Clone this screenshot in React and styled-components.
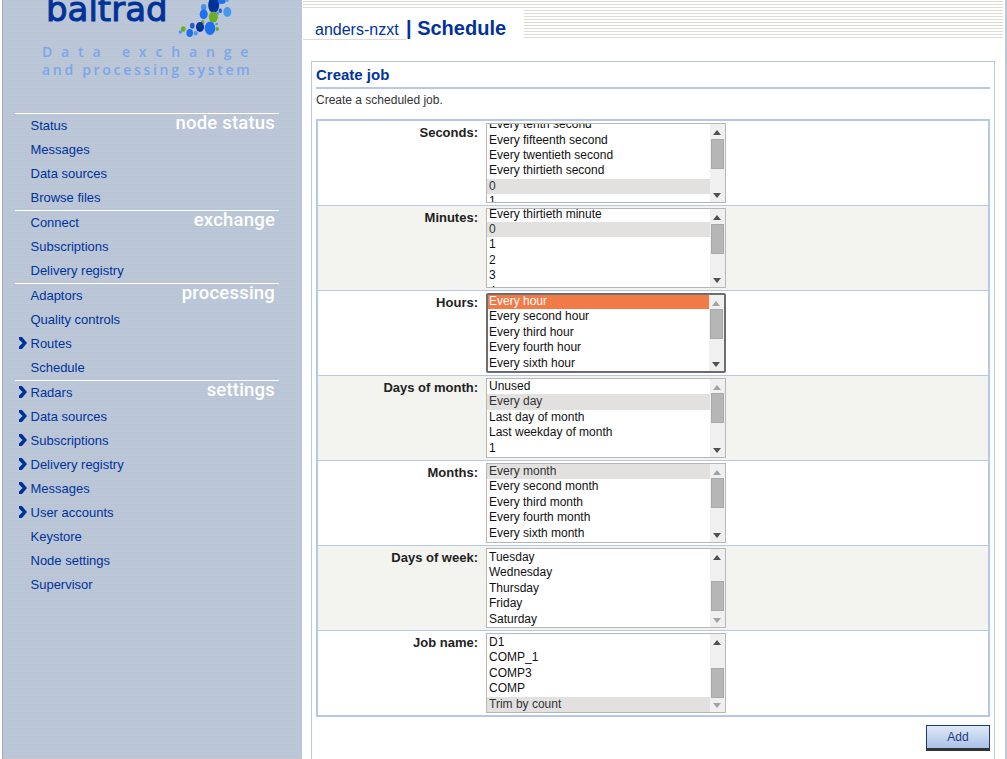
import React from "react";
import styled, { createGlobalStyle } from "styled-components";

const Global = createGlobalStyle`
  html, body { margin: 0; padding: 0; background: #fff; }
  body { font-family: "Liberation Sans", Arial, sans-serif; }
`;

const Page = styled.div`
  display: flex;
  width: 1007px;
  height: 759px;
  overflow: hidden;
  background: #fff;
`;

const Sidebar = styled.aside`
  width: 299px;
  margin-left: 2px;
  margin-right: 1px;
  flex: none;
  border-left: 1px solid #a9a9a9;
  background: repeating-linear-gradient(180deg, #c2c3c6 0 1px, #b4c8e8 1px 2px);
`;

const LogoBlock = styled.div`
  position: relative;
  height: 113px;
  overflow: hidden;
`;

const Wordmark = styled.div`
  padding-left: 43px;
  margin-top: -12px;
  height: 42px;
  font: 400 34px/42px "DejaVu Sans", sans-serif;
  -webkit-text-stroke: 1px #003399;
  color: #003399;
`;

const Blobs = styled.svg`
  position: absolute;
  left: 164px;
  top: 0;
`;

const TagWrap = styled.div`
  padding-top: 13px;
  padding-left: 39px;
`;

const Tagline = styled.div`
  font: 600 14px/18px "Open Sans", sans-serif;
  color: #7ba6e8;
  letter-spacing: ${(p) => p.$spacing}px;
  white-space: nowrap;
  height: 18px;
`;

const Section = styled.section`
  position: relative;
  width: 264px;
  margin-left: 12px;
  border-top: 1px solid #fff;
`;

const SectionTitle = styled.div`
  position: absolute;
  right: 4px;
  top: -3px;
  font: 500 18.5px/24px Roboto, sans-serif;
  letter-spacing: 0.2px;
  color: #fff;
`;

const NavItem = styled.a`
  display: flex;
  align-items: center;
  height: 24px;
  box-sizing: border-box;
  padding: 0 0 2px 2.5px;
  font-size: 13px;
  color: #003399;
`;

const Chevron = styled.svg`
  width: 9px;
  height: 12px;
  flex: none;
`;

const ChevronSlot = styled.span`
  display: flex;
  width: 13px;
  flex: none;
`;

const Main = styled.main`
  flex: 1;
  min-width: 0;
  display: flex;
  flex-direction: column;
  margin-right: 2px;
  position: relative;
`;

const Stripes = styled.div`
  margin-right: 2px;
  background: repeating-linear-gradient(180deg, #fff 0 1px, #dddcd5 1px 2px, #fff 2px 3px);
`;

const TopBand = styled(Stripes)`
  height: 9px;
`;

const HeadRow = styled.div`
  display: flex;
  height: 31px;
`;

const HeadTab = styled.div`
  width: 221px;
  flex: none;
  display: flex;
  background: #fff;
`;

const NodeName = styled.div`
  width: 103px;
  padding-left: 12px;
  box-sizing: border-box;
  height: 31px;
  border-bottom: 1px solid #dcdcd8;
  font-size: 16px;
  line-height: 41px;
  color: #003399;
  white-space: nowrap;
`;

const PageTitle = styled.div`
  font-size: 20px;
  font-weight: 700;
  line-height: 38px;
  color: #003399;
  white-space: nowrap;
`;

const HeadFill = styled(Stripes)`
  flex: 1;
`;

const Strip = styled.div`
  position: absolute;
  top: 0;
  right: -2px;
  width: 2px;
  height: 100%;
  background: #c0c6d2;
`;

const Card = styled.div`
  margin: 21px 8px 0 8px;
  width: 684px;
  box-sizing: border-box;
  flex: 1;
  border: 1px solid #b8c9e6;
  border-bottom: none;
  padding: 0 4px;
`;

const CardTitle = styled.h2`
  margin: 0;
  height: 25px;
  border-bottom: 2px solid #b8c9e6;
  font-size: 15px;
  font-weight: 700;
  line-height: 26px;
  color: #003399;
`;

const CardText = styled.p`
  margin: 0;
  height: 30px;
  font-size: 12px;
  line-height: 22px;
  color: #333;
`;

const Table = styled.div`
  border: 2px solid #b4c9e8;
`;

const Row = styled.div`
  display: flex;
  height: 85px;
  box-sizing: border-box;
  padding-top: 2px;
  border-bottom: 1px solid #b4c9e8;
  background: ${(p) => (p.$alt ? "#f3f3ef" : "#fff")};
  &:last-child {
    border-bottom: none;
    height: 84px;
  }
`;

const Label = styled.div`
  width: 160px;
  margin-right: 8px;
  flex: none;
  text-align: right;
  font-size: 13px;
  font-weight: 700;
  line-height: 15px;
  padding-top: 2px;
  color: #222;
`;

const ListBox = styled.div`
  display: flex;
  width: 240px;
  height: 80px;
  box-sizing: border-box;
  background: #fff;
  overflow: hidden;
  border: ${(p) => (p.$focus ? "2px solid #6d6d6d" : "1px solid #b7b7b7")};
  border-radius: ${(p) => (p.$focus ? "2px" : "0")};
`;

const Options = styled.div`
  flex: 1;
  min-width: 0;
  margin-top: ${(p) => p.$offset}px;
`;

const Option = styled.div`
  height: 15.4px;
  line-height: 15.4px;
  padding-left: ${(p) => (p.$inFocus ? "1px" : "2px")};
  font-size: 12px;
  white-space: nowrap;
  color: ${(p) => (p.$sel === "focus" ? "#fff" : p.$sel ? "#333" : "#111")};
  background: ${(p) => (p.$sel === "focus" ? "#f17a47" : p.$sel ? "#e2e1df" : "transparent")};
`;

const Track = styled.div`
  width: 15px;
  flex: none;
  background: #f0f0f0;
  position: relative;
`;

const Thumb = styled.div`
  position: absolute;
  left: 1px;
  right: 1px;
  height: 30px;
  box-sizing: border-box;
  background: #b6b6b6;
  border: 1px solid #a9a9a9;
`;

const Arrow = styled.svg`
  position: absolute;
  left: 3px;
  width: 8px;
  height: 5px;
  ${(p) => (p.$down ? "bottom: 4px;" : "top: 6px;")}
`;

const Actions = styled.div`
  display: flex;
  justify-content: flex-end;
  padding-top: 8px;
`;

const AddButton = styled.button`
  width: 64px;
  height: 26px;
  box-sizing: border-box;
  padding: 0;
  border: 1px solid #1c3a78;
  border-bottom: 3px solid #333;
  background: linear-gradient(180deg, #dfe8f6, #a9c2e8);
  color: #1f3a7a;
  font: 12px "Liberation Sans", sans-serif;
`;

const nav = [
  { title: "node status", items: [["Status"], ["Messages"], ["Data sources"], ["Browse files"]] },
  { title: "exchange", items: [["Connect"], ["Subscriptions"], ["Delivery registry"]] },
  { title: "processing", items: [["Adaptors"], ["Quality controls"], ["Routes", 1], ["Schedule"]] },
  {
    title: "settings",
    items: [["Radars", 1], ["Data sources", 1], ["Subscriptions", 1], ["Delivery registry", 1], ["Messages", 1], ["User accounts", 1], ["Keystore"], ["Node settings"], ["Supervisor"]],
  },
];

const rows = [
  { label: "Seconds:", offset: -6.7, thumb: 15, opts: ["Every tenth second", "Every fifteenth second", "Every twentieth second", "Every thirtieth second", "0", "1"], sel: "0", up: 1, down: 1 },
  { label: "Minutes:", offset: -2.4, thumb: 15, opts: ["Every thirtieth minute", "0", "1", "2", "3", "4"], sel: "0", up: 1, down: 1 },
  { label: "Hours:", offset: -1, thumb: 14, focus: true, opts: ["Every hour", "Every second hour", "Every third hour", "Every fourth hour", "Every sixth hour", "Every eighth hour"], sel: "Every hour", up: 0, down: 1 },
  { label: "Days of month:", offset: 0, thumb: 14, opts: ["Unused", "Every day", "Last day of month", "Last weekday of month", "1", "2"], sel: "Every day", up: 0, down: 1 },
  { label: "Months:", offset: 0, thumb: 14, opts: ["Every month", "Every second month", "Every third month", "Every fourth month", "Every sixth month", "Every eighth month"], sel: "Every month", up: 0, down: 1 },
  { label: "Days of week:", offset: 1.1, thumb: 32, opts: ["Tuesday", "Wednesday", "Thursday", "Friday", "Saturday"], sel: null, up: 1, down: 0 },
  { label: "Job name:", offset: 1.1, thumb: 34, opts: ["D1", "COMP_1", "COMP3", "COMP", "Trim by count"], sel: "Trim by count", up: 1, down: 0 },
];

const blobs = [
  [46.7, 5, 5.5, 8, "#003399"], [36.7, 7.3, 2.7, 3.3, "#4a90e8"], [36.7, 14.3, 4, 5, "#1f6fee"], [46.3, 17, 4.5, 5.5, "#6cae1e"],
  [60.3, 12, 4, 5, "#4a98ee"], [54.7, 1, 4, 3, "#1f6fee"], [53.3, 10.7, 1.7, 2.3, "#1f5fd0"], [50.7, 13.3, 1.3, 1.7, "#4a98ee"],
  [35.7, 22, 1.7, 2, "#6cae1e"], [33, 27, 4, 5, "#003399"], [43, 28.3, 5.3, 6.7, "#1f6fee"], [25.3, 25.7, 2.3, 3, "#1f5fd0"],
  [16.3, 29, 2.3, 2.7, "#6cae1e"], [22.7, 33, 3.3, 4, "#1f6fee"], [28.7, 33.3, 2, 2.3, "#4a98ee"], [13.3, 32, 1.7, 1.7, "#4a98ee"],
  [50.3, 29, 1.7, 2, "#6cae1e"], [49.7, 24, 1.3, 1.3, "#4a98ee"], [60.3, 0.7, 1.3, 1.3, "#4a98ee"],
];

function ScrollArrow({ down, active }) {
  return (
    <Arrow $down={down} viewBox="0 0 8 5">
      <polygon points={down ? "0,0 8,0 4,5" : "0,5 8,5 4,0"} fill={active ? "#505050" : "#a3a3a3"} />
    </Arrow>
  );
}

export default function App() {
  return (
    <Page>
      <Global />
      <Sidebar>
        <LogoBlock>
          <Wordmark>baltrad</Wordmark>
          <Blobs width="70" height="40" viewBox="0 0 70 40">
            {blobs.map(([cx, cy, rx, ry, c], i) => (
              <ellipse key={i} cx={cx} cy={cy} rx={rx} ry={ry} fill={c} />
            ))}
          </Blobs>
          <TagWrap>
            <Tagline $spacing={8.85}>Data exchange</Tagline>
            <Tagline $spacing={2.7}>and processing system</Tagline>
          </TagWrap>
        </LogoBlock>
        {nav.map((s) => (
          <Section key={s.title}>
            <SectionTitle>{s.title}</SectionTitle>
            {s.items.map(([name, more]) => (
              <NavItem key={name}>
                <ChevronSlot>
                  {more ? (
                    <Chevron viewBox="0 0 9 12">
                      <polygon points="1,0 4,0 9,6 4,12 1,12 1,9.5 4.5,6 1,2.5" fill="#003399" />
                    </Chevron>
                  ) : null}
                </ChevronSlot>
                {name}
              </NavItem>
            ))}
          </Section>
        ))}
      </Sidebar>
      <Main>
        <Strip />
        <TopBand />
        <HeadRow>
          <HeadTab>
            <NodeName>anders-nzxt</NodeName>
            <PageTitle>| Schedule</PageTitle>
          </HeadTab>
          <HeadFill />
        </HeadRow>
        <Card>
          <CardTitle>Create job</CardTitle>
          <CardText>Create a scheduled job.</CardText>
          <Table>
            {rows.map((r, i) => (
              <Row key={r.label} $alt={i % 2 === 1}>
                <Label>{r.label}</Label>
                <ListBox $focus={r.focus}>
                  <Options $offset={r.offset}>
                    {r.opts.map((o) => (
                      <Option key={o} $inFocus={r.focus} $sel={o === r.sel ? (r.focus ? "focus" : true) : false}>
                        {o}
                      </Option>
                    ))}
                  </Options>
                  <Track>
                    <ScrollArrow active={r.up} />
                    <Thumb style={{ top: r.thumb }} />
                    <ScrollArrow down active={r.down} />
                  </Track>
                </ListBox>
              </Row>
            ))}
          </Table>
          <Actions>
            <AddButton>Add</AddButton>
          </Actions>
        </Card>
      </Main>
    </Page>
  );
}
